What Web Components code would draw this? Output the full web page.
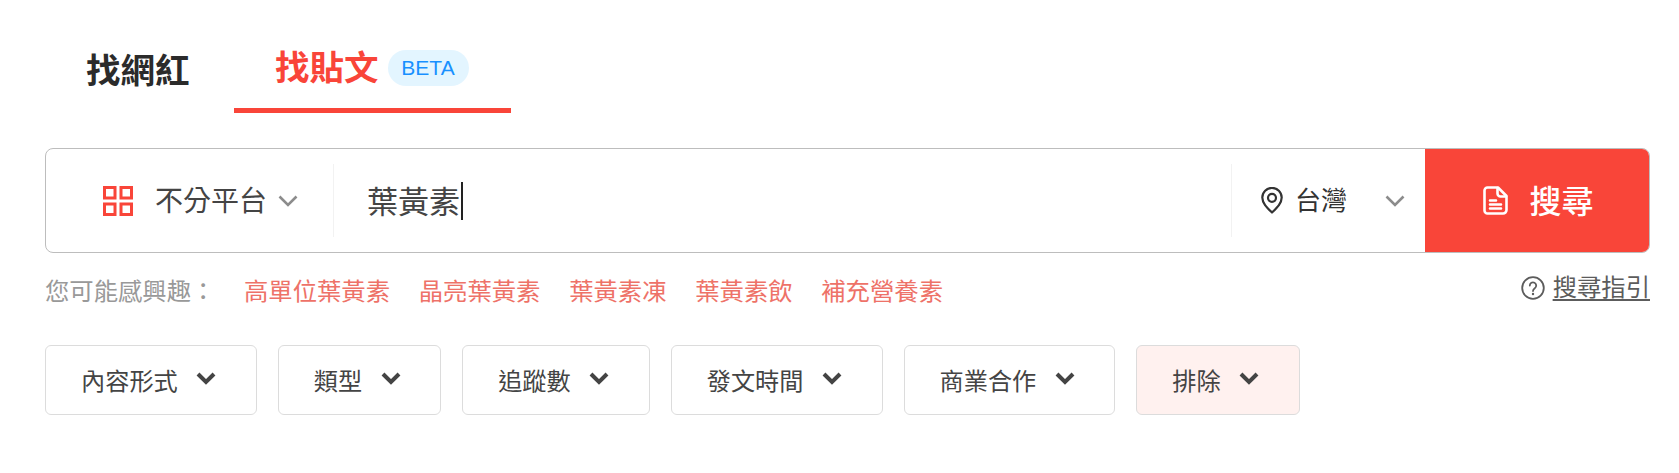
<!DOCTYPE html>
<html lang="zh-Hant">
<head>
<meta charset="utf-8">
<title>找貼文</title>
<style>
  html, body { margin: 0; background: #fff; }
  body {
    font-family: "Noto Sans CJK TC", "Liberation Sans", sans-serif;
    color: #444;
  }
</style>
</head>
<body>
<search-page>
  <tab-bar>
    <tab-item>找網紅</tab-item>
    <tab-item active beta>找貼文</tab-item>
  </tab-bar>
  <search-bar platform="不分平台" query="葉黃素" region="台灣" action="搜尋"></search-bar>
  <suggest-row label="您可能感興趣：" guide="搜尋指引">
    <a>高單位葉黃素</a>
    <a>晶亮葉黃素</a>
    <a>葉黃素凍</a>
    <a>葉黃素飲</a>
    <a>補充營養素</a>
  </suggest-row>
  <filter-row>
    <filter-chip>內容形式</filter-chip>
    <filter-chip>類型</filter-chip>
    <filter-chip>追蹤數</filter-chip>
    <filter-chip>發文時間</filter-chip>
    <filter-chip>商業合作</filter-chip>
    <filter-chip tinted>排除</filter-chip>
  </filter-row>
</search-page>

<script>
const FONT = `"Noto Sans CJK TC", "Liberation Sans", sans-serif`;

class SearchPage extends HTMLElement {
  connectedCallback() {
    if (this.shadowRoot) return;
    this.attachShadow({ mode: "open" });
    this.shadowRoot.innerHTML = `
    <style>
      :host {
        display: flex;
        flex-direction: column;
        width: 1605px;
        padding: 0 29px 0 45px;
        font-family: ${FONT};
      }
    </style>
    <slot></slot>`;
  }
}

class TabBar extends HTMLElement {
  connectedCallback() {
    if (this.shadowRoot) return;
    this.attachShadow({ mode: "open" });
    this.shadowRoot.innerHTML = `
    <style>
      :host {
        display: flex;
        height: 113px;
        align-items: stretch;
      }
    </style>
    <slot></slot>`;
  }
}

class TabItem extends HTMLElement {
  connectedCallback() {
    if (this.shadowRoot) return;
    let active = this.hasAttribute("active");
    let beta = this.hasAttribute("beta");
    this.attachShadow({ mode: "open" });
    this.shadowRoot.innerHTML = `
    <style>
      :host {
        display: flex;
        align-items: center;
        box-sizing: border-box;
        width: ${active ? 277 : 189}px;
        padding: ${active ? "49px 0 28px 41px" : "43px 0 21px 41px"};
        font-size: 34.5px;
        font-weight: 700;
        line-height: 50px;
        color: #2b2b2b;
      }
      :host([active]) {
        color: #f94539;
        border-bottom: 5px solid #f94539;
      }
      .beta {
        margin: 6px 0 0 9px;
        width: 81px;
        height: 36px;
        border-radius: 18px;
        background: #e3f5ff;
        color: #1890ff;
        font: 400 21px/36px "Liberation Sans", Arial, sans-serif;
        text-align: center;
      }
    </style>
    <slot></slot>${beta ? `<span class="beta">BETA</span>` : ""}`;
  }
}

class SearchBar extends HTMLElement {
  connectedCallback() {
    if (this.shadowRoot) return;
    this.attachShadow({ mode: "open" });
    this.shadowRoot.innerHTML = `
    <style>
      :host {
        display: flex;
        box-sizing: border-box;
        height: 105px;
        margin-top: 35px;
        border: 1px solid #bdbdbd;
        border-radius: 8px;
        align-items: center;
        overflow: hidden;
      }
      svg { display: block; flex: none; }
      .platform {
        display: flex;
        align-items: center;
        box-sizing: border-box;
        width: 288px;
        height: 73px;
        padding-left: 57px;
        border-right: 1px solid #f2f2f2;
        font-size: 28px;
        color: #444;
      }
      .platform .name { margin: 0 0 3px 22px; }
      .platform .chev { margin-left: 11px; }
      .query {
        flex: 1;
        display: flex;
        align-items: center;
        padding-left: 33px;
        font-size: 31px;
        color: #444;
      }
      .query span:first-child { margin-bottom: 2px; }
      .caret {
        width: 2px;
        height: 38px;
        margin-left: 1px;
        background: #222;
      }
      .region {
        display: flex;
        align-items: center;
        box-sizing: border-box;
        width: 194px;
        height: 73px;
        padding-left: 29px;
        border-left: 1px solid #f2f2f2;
        font-size: 26px;
        color: #333;
      }
      .region .name { margin: 0 0 4px 12px; }
      .region .chev { margin-left: 38px; }
      .action {
        display: flex;
        align-items: center;
        justify-content: center;
        width: 224px;
        height: 100%;
        align-self: stretch;
        padding-left: 3px;
        box-sizing: border-box;
        background: #f94539;
        color: #fff;
        font-size: 32px;
        font-weight: 500;
      }
      .action .name { margin: 0 0 3px 21px; }
    </style>
    <div class="platform">
      <svg width="30" height="30" viewBox="0 0 30 30" fill="none" stroke="#f94539" stroke-width="3">
        <rect x="1.5" y="1.5" width="10.5" height="10.5"/>
        <rect x="18" y="1.5" width="10.5" height="10.5"/>
        <rect x="1.5" y="18" width="10.5" height="10.5"/>
        <rect x="18" y="18" width="10.5" height="10.5"/>
      </svg>
      <span class="name">${this.getAttribute("platform")}</span>
      <svg class="chev" width="20" height="12" viewBox="0 0 20 12" fill="none" stroke="#8c8c8c" stroke-width="2.6"><path d="M1.5 1.5 10 10l8.5-8.5"/></svg>
    </div>
    <div class="query"><span>${this.getAttribute("query")}</span><span class="caret"></span></div>
    <div class="region">
      <svg width="22" height="27" viewBox="0 0 22 27" fill="none" stroke="#333" stroke-width="2.2">
        <path d="M11 25.5C6 20.6 1.3 16.2 1.3 10.6a9.7 9.7 0 0 1 19.4 0C20.700 16.200 16 20.600 11 25.500z" stroke-linejoin="round"/>
        <circle cx="11" cy="10.800" r="4"/>
      </svg>
      <span class="name">${this.getAttribute("region")}</span>
      <svg class="chev" width="20" height="12" viewBox="0 0 20 12" fill="none" stroke="#8c8c8c" stroke-width="2.6"><path d="M1.5 1.5 10 10l8.500-8.500"/></svg>
    </div>
    <div class="action">
      <svg width="25" height="29" viewBox="0 0 25 29" fill="none" stroke="#fff" stroke-width="2.6" stroke-linejoin="round" stroke-linecap="round">
        <path d="M4.500 1.500h10.500l8.500 8.500v14a3.500 3.500 0 0 1-3.500 3.500h-15.500a3 3 0 0 1-3-3v-20a3 3 0 0 1 3-3z"/>
        <path d="M14.500 2v5.500a3 3 0 0 0 3 3h5.500"/>
        <path d="M7 14.500h6M7 18.500h11M7 22.500h11"/>
      </svg>
      <span class="name">${this.getAttribute("action")}</span>
    </div>`;
  }
}

class SuggestRow extends HTMLElement {
  connectedCallback() {
    if (this.shadowRoot) return;
    this.attachShadow({ mode: "open" });
    this.shadowRoot.innerHTML = `
    <style>
      :host {
        display: flex;
        align-items: center;
        height: 74px;
        font-size: 24.35px;
      }
      .label {
        width: 199px;
        flex: none;
        color: #999;
        margin-bottom: 2px;
      }
      ::slotted(a) {
        margin: 0 28.7px 2px 0;
        color: #ee7268;
      }
      .guide {
        margin: 0 0 10px auto;
        display: flex;
        align-items: center;
        color: #5c5c5c;
      }
      .guide span {
        margin-left: 8px;
        text-decoration: underline;
        text-underline-offset: 3px;
      }
      svg { display: block; margin-top: 6px; }
    </style>
    <span class="label">${this.getAttribute("label")}</span>
    <slot></slot>
    <div class="guide">
      <svg width="24" height="24" viewBox="0 0 24 24" fill="none" stroke="#5c5c5c" stroke-width="1.800">
        <circle cx="12" cy="12" r="10.800"/>
        <path d="M8.800 9.500a3.200 3.200 0 1 1 5 2.700c-1.100.8-1.800 1.400-1.800 2.800" stroke-linecap="round"/>
        <circle cx="12" cy="18" r="1.200" fill="#5c5c5c" stroke="none"/>
      </svg>
      <span>${this.getAttribute("guide")}</span>
    </div>`;
  }
}

class FilterRow extends HTMLElement {
  connectedCallback() {
    if (this.shadowRoot) return;
    this.attachShadow({ mode: "open" });
    this.shadowRoot.innerHTML = `
    <style>
      :host {
        display: flex;
        gap: 21px;
        margin-top: 18px;
      }
    </style>
    <slot></slot>`;
  }
}

class FilterChip extends HTMLElement {
  connectedCallback() {
    if (this.shadowRoot) return;
    this.attachShadow({ mode: "open" });
    this.shadowRoot.innerHTML = `
    <style>
      :host {
        display: flex;
        align-items: center;
        box-sizing: border-box;
        height: 70px;
        padding: 0 39.5px 2px 35px;
        border: 1px solid #dcdcdc;
        border-radius: 6px;
        background: #fff;
        font-size: 24.2px;
        color: #444;
      }
      :host([tinted]) { background: #fff1ef; }
      svg { display: block; margin: -2px 0 0 18.5px; }
    </style>
    <slot></slot>
    <svg width="20" height="13" viewBox="0 0 20 13" fill="none" stroke="#444" stroke-width="4"><path d="M2 2l8 8 8-8"/></svg>`;
  }
}

customElements.define("search-page", SearchPage);
customElements.define("tab-bar", TabBar);
customElements.define("tab-item", TabItem);
customElements.define("search-bar", SearchBar);
customElements.define("suggest-row", SuggestRow);
customElements.define("filter-row", FilterRow);
customElements.define("filter-chip", FilterChip);
</script>
</body>
</html>
